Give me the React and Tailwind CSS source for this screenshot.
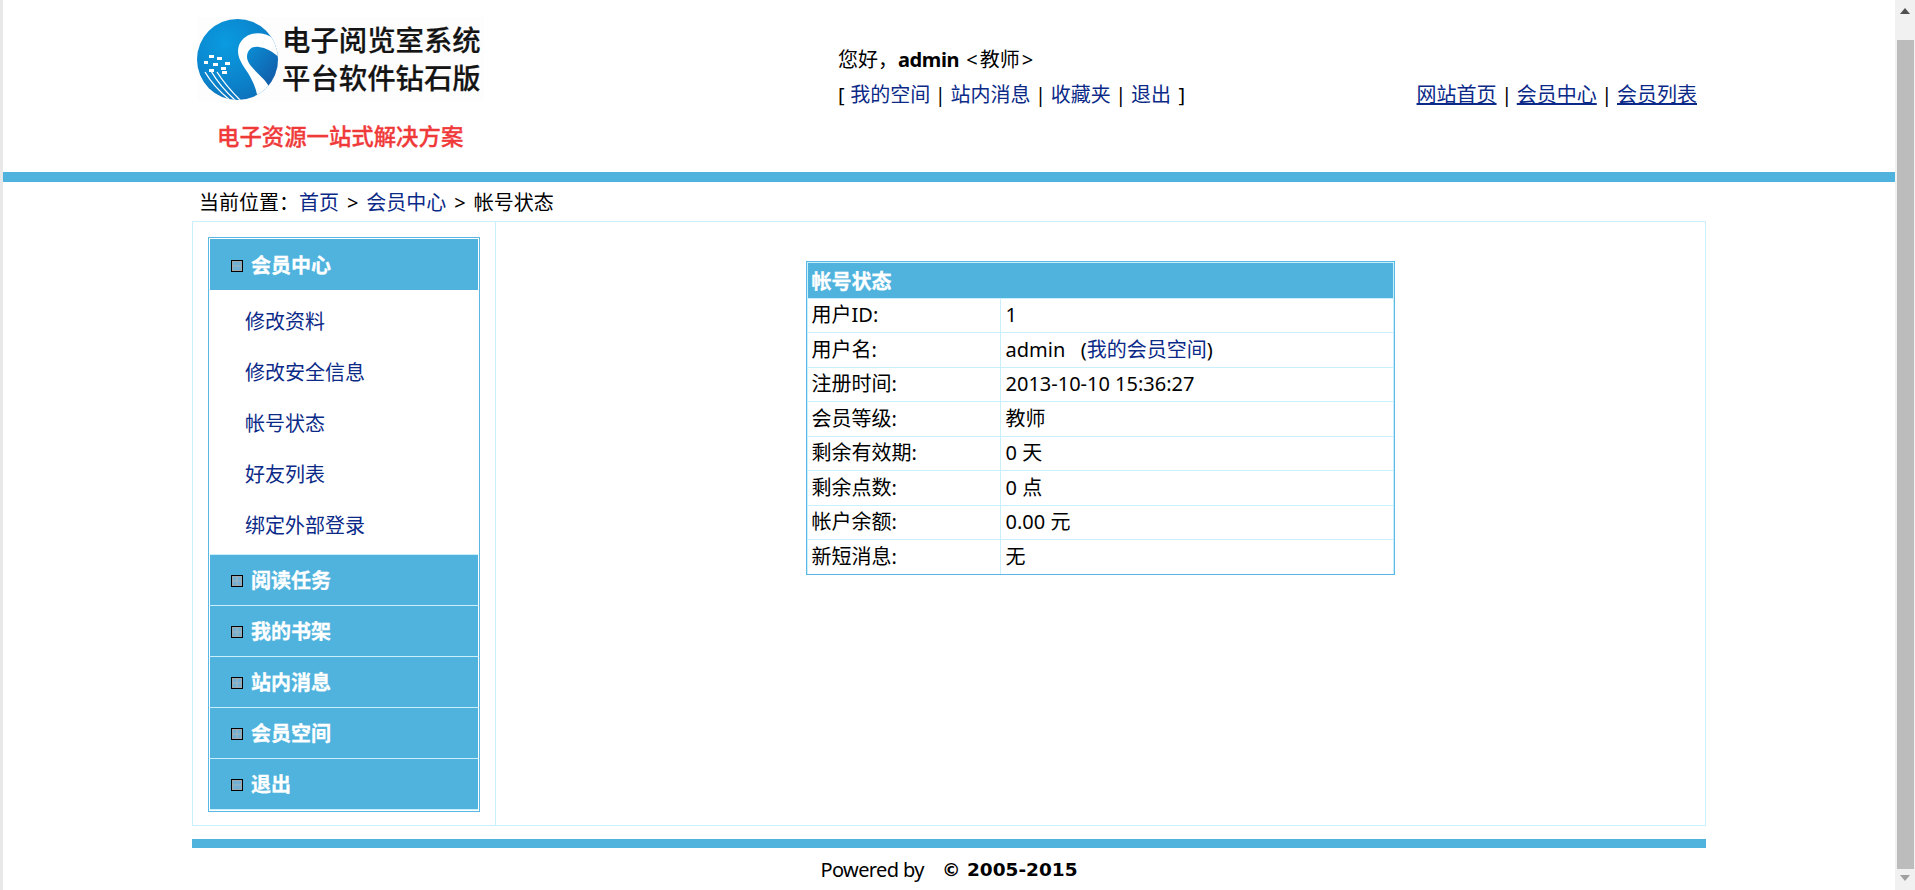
import React from "react";

function Logo() {
  return (
    <svg width="82" height="82" viewBox="0 0 82 82" className="mt-[2px] shrink-0 blur-[0.4px]">
      <defs>
        <radialGradient id="g1" cx="35%" cy="30%" r="80%">
          <stop offset="0%" stopColor="#0a9be0" />
          <stop offset="60%" stopColor="#0b84cc" />
          <stop offset="100%" stopColor="#0d6fb8" />
        </radialGradient>
        <linearGradient id="g2" x1="0" y1="0" x2="1" y2="1">
          <stop offset="0%" stopColor="#0a8fd6" />
          <stop offset="100%" stopColor="#14529f" />
        </linearGradient>
        <clipPath id="c1"><circle cx="40.5" cy="40.5" r="40.5" /></clipPath>
      </defs>
      <circle cx="40.5" cy="40.5" r="40.5" fill="url(#g1)" />
      <g clipPath="url(#c1)">
        <path d="M76 19 C66 12 50 12 43 24 C37 36 46 46 51 54 C57 64 60 72 61 82 L90 82 L90 10 Z" fill="#fff" />
        <path d="M50 38 C50 30 56 27 62 28 C70 29 76 33 84 40 L84 55 C80 62 76 66 72 68 C68 58 50 48 50 38 Z" fill="url(#g2)" />
        <path d="M8 53 C15 65 24 74 34 82 M14 52 C21 64 29 73 39 82 M20 53 C27 64 35 73 44 82" stroke="#fff" strokeWidth="1.3" fill="none" />
      </g>
      <g fill="#fff">
        <rect x="12" y="36" width="5" height="3" />
        <rect x="20" y="38" width="5" height="3" />
        <rect x="7" y="42" width="4" height="3" />
        <rect x="16" y="44" width="5" height="3" />
        <rect x="28" y="43" width="5" height="3" />
        <rect x="24" y="48" width="5" height="3" />
        <rect x="12" y="50" width="5" height="3" />
        <rect x="25" y="52" width="5" height="3" />
      </g>
    </svg>
  );
}

function Box({ plus }) {
  return (
    <svg width="12" height="12" viewBox="0 0 12 12" className="shrink-0">
      <rect x="0.5" y="0.5" width="11" height="11" fill="#a0a8ac" stroke="#000" />
      <rect x="2" y="2" width="8" height="8" fill="#6fb0d4" />
      <path d={plus ? "M2 6H10M6 2V10" : "M2 6H10"} stroke="#a9b4ba" strokeWidth="1" />
    </svg>
  );
}

function SideHead({ label, plus, first }) {
  return (
    <div className={`flex items-center bg-[#4fb3de] pl-[21px] h-[51px] ${first ? "" : "border-t border-[#c9effc]"}`}>
      <div className="mt-[2px] flex"><Box plus={plus} /></div>
      <span className="ml-[8px] pt-[2px] text-[20px] font-bold text-white [-webkit-text-stroke:0.3px_white]">{label}</span>
    </div>
  );
}

const A = ({ children, u }) => (
  <a className={`text-[#0b2a88] ${u ? "underline" : ""}`}>{children}</a>
);

const rows = [
  ["用户ID:", "1"],
  ["用户名:", null],
  ["注册时间:", "2013-10-10 15:36:27"],
  ["会员等级:", "教师"],
  ["剩余有效期:", "0 天"],
  ["剩余点数:", "0 点"],
  ["帐户余额:", "0.00 元"],
  ["新短消息:", "无"],
];

export default function App() {
  return (
    <div
      className="flex h-[890px] overflow-hidden bg-white text-[20px] leading-[26px] text-black"
      style={{ fontFamily: '"Noto Sans", "Noto Sans CJK SC", sans-serif' }}
    >
      <div className="w-[3px] shrink-0 bg-[#e8e8e8]" />
      <div className="flex min-w-0 flex-1 flex-col">
        <header className="h-[172px] shrink-0">
          <div className="mx-auto flex h-full w-[1514px]">
            <div className="w-[646px] shrink-0 pl-[5px] pt-[17px]">
              <div className="flex h-[84px] w-[287px] bg-[#fdfdfe]">
                <Logo />
                <div className="ml-[3px] pt-[4px] text-[28.4px] leading-[38px] font-medium whitespace-nowrap text-[#141414] [-webkit-text-stroke:0.2px_#141414]">
                  <div>电子阅览室系统</div>
                  <div>平台软件钻石版</div>
                </div>
              </div>
              <div className="mt-[21px] pl-[20px] text-[22.4px] leading-[30px] font-medium whitespace-nowrap text-[#f03a3a] [-webkit-text-stroke:0.3px_#f03a3a]">
                电子资源一站式解决方案
              </div>
            </div>
            <div className="pt-[47px] whitespace-nowrap">
              <div className="h-[35px]">
                您好，<b className="font-bold tracking-[-0.4px]">admin</b>
                <span className="ml-[2px]"> <span className="pr-[2px]">&lt;</span>教师<span className="pl-[2px]">&gt;</span></span>
              </div>
              <div className="[word-spacing:-0.6px]">
                [<span className="ml-[1px]"> </span><A>我的空间</A> | <A>站内消息</A> | <A>收藏夹</A> | <A>退出</A><span className="mr-[3px]"> </span>]
              </div>
            </div>
            <div className="ml-auto pt-[82px] pr-[9px] whitespace-nowrap [word-spacing:-0.6px]">
              <A u>网站首页</A> | <A u>会员中心</A> | <A u>会员列表</A>
            </div>
          </div>
        </header>
        <div className="h-[10px] shrink-0 bg-[#4fb3de]" />
        <main className="mx-auto w-[1514px]">
          <div className="flex h-[39px] items-center pt-[2px] pl-[7px] whitespace-nowrap">
            <span>当前位置：</span>
            <span>
              <A>首页</A> <span className="px-[2.75px]">&gt;</span> <A>会员中心</A> <span className="px-[2.75px]">&gt;</span> 帐号状态
            </span>
          </div>
          <div className="flex h-[605px] border border-[#c9effc]">
            <aside className="w-[303px] shrink-0 border-r border-[#c9effc] px-[15px] pt-[15px]">
              <div className="w-[272px] border border-[#5bb8e5] bg-white p-px">
                <SideHead label="会员中心" first />
                <div className="flex flex-col pt-[6px] pb-[3px]">
                  {["修改资料", "修改安全信息", "帐号状态", "好友列表", "绑定外部登录"].map((t) => (
                    <div key={t} className="flex h-[51px] items-center pl-[35px]"><A>{t}</A></div>
                  ))}
                </div>
                <SideHead label="阅读任务" plus />
                <SideHead label="我的书架" plus />
                <SideHead label="站内消息" plus />
                <SideHead label="会员空间" plus />
                <SideHead label="退出" />
                <div className="h-px bg-[#c9effc]" />
              </div>
            </aside>
            <section className="flex flex-1 justify-center pt-[39px] pr-[1px]">
              <div className="h-[314px] w-[589px] border border-[#5bb8e5] bg-[#c9effc] p-px">
                <div className="flex h-[34.5px] items-center bg-[#4fb3de] pt-[3px] pl-[4px] font-bold text-white [-webkit-text-stroke:0.3px_white]">帐号状态</div>
                {rows.map(([k, v]) => (
                  <div key={k} className="flex h-[34.5px] border-t border-[#c9effc] bg-white">
                    <div className="flex w-[193px] shrink-0 items-center border-r border-[#c9effc] pl-[4px]">{k}</div>
                    <div className="flex flex-1 items-center pl-[5px] whitespace-pre">
                      {v ?? (<span>admin{"   "}(<A>我的会员空间</A>)</span>)}
                    </div>
                  </div>
                ))}
              </div>
            </section>
          </div>
          <div className="mt-[13px] h-[9px] bg-[#4fb3de]" />
          <div className="flex h-[42px] items-center justify-center pt-[1px] whitespace-pre">
            <span className="tracking-[-0.6px]">Powered by</span>
            <b className="ml-[18px] text-[18.5px] font-bold" style={{ fontFamily: '"DejaVu Sans", sans-serif' }}>© 2005-2015</b>
          </div>
        </main>
      </div>
      <div className="flex w-[20px] shrink-0 flex-col items-center bg-[#f1f1f1]">
        <div className="flex h-[40px] w-full shrink-0 justify-center pt-[8px]">
          <svg width="10" height="6" viewBox="0 0 10 6"><path d="M5 0L10 6H0Z" fill="#505050" /></svg>
        </div>
        <div className="ml-[1px] h-[829px] w-[17px] shrink-0 bg-[#bcbcbc]" />
        <div className="flex flex-1 justify-center pt-[6px]">
          <svg width="10" height="6" viewBox="0 0 10 6"><path d="M0 0H10L5 6Z" fill="#a0a0a0" /></svg>
        </div>
      </div>
    </div>
  );
}
